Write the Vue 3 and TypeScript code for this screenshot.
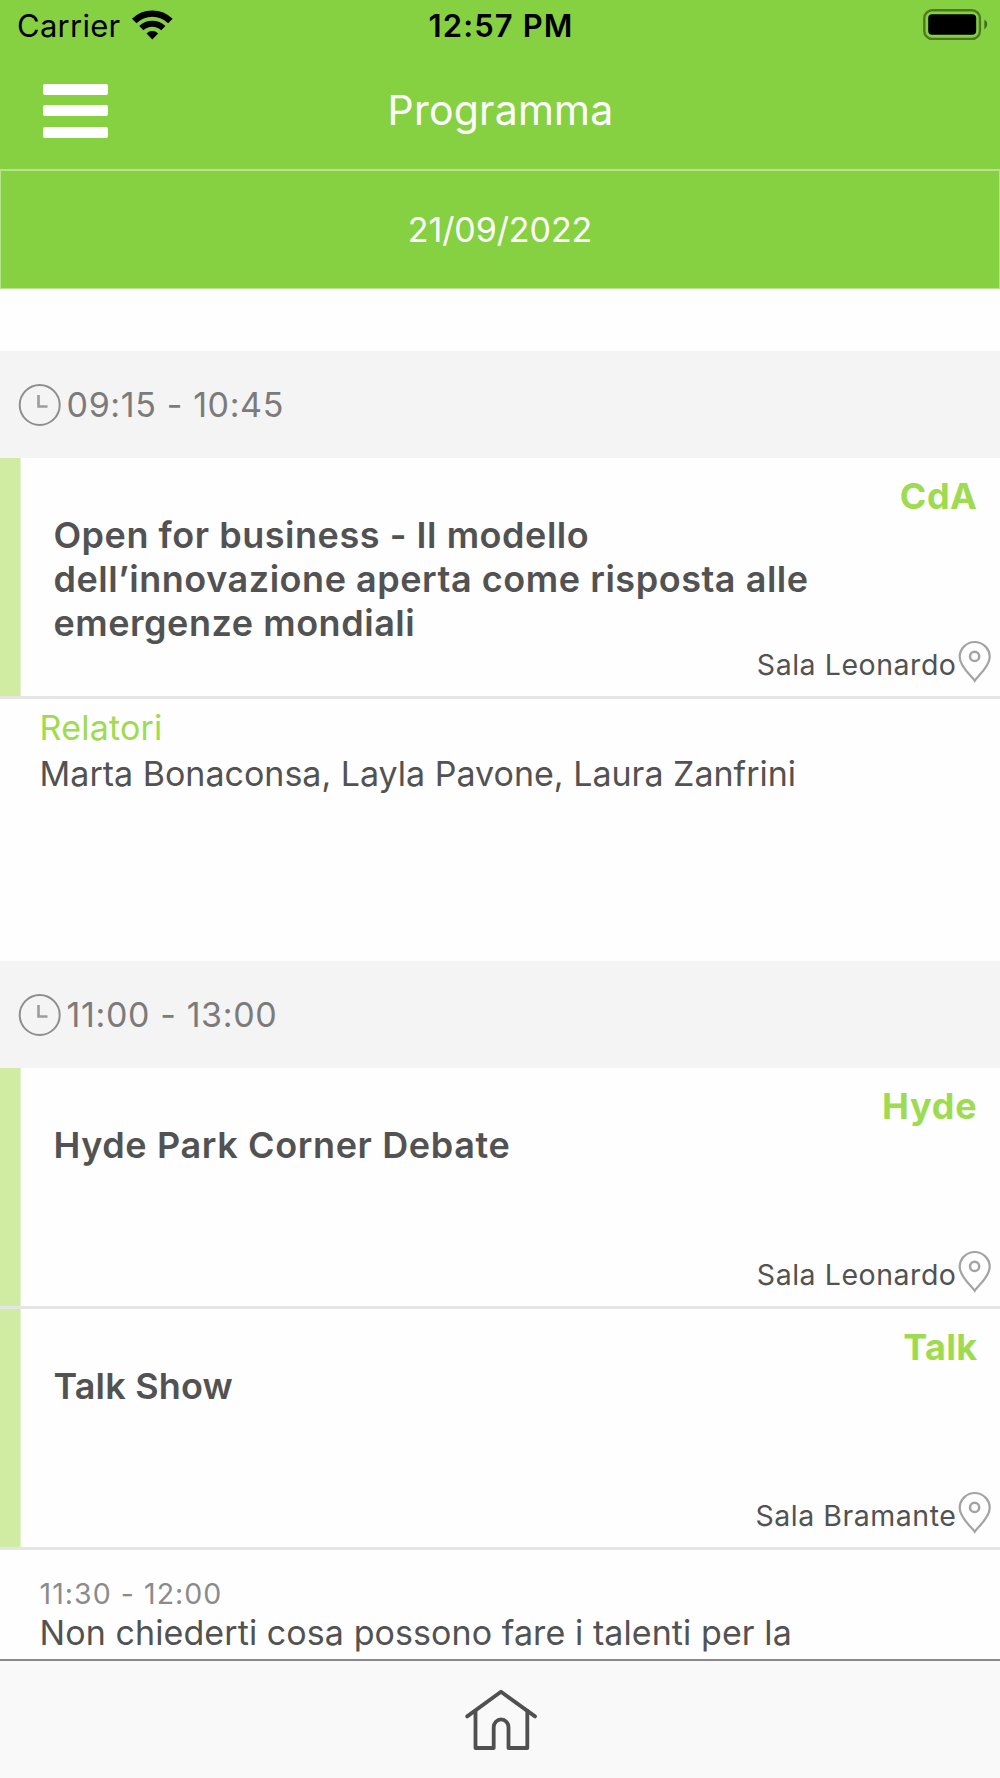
<script setup lang="ts">
interface Talk {
  tag: string
  title: string[]
  room: string
  spacing: number
  tagSpacing: number
}
interface Slot {
  time: string
  talks: Talk[]
  speakers?: string
  detail?: { time: string; text: string }
}

const slots: Slot[] = [
  {
    time: '09:15 - 10:45',
    talks: [
      {
        tag: 'CdA',
        title: [
          'Open for business - Il modello',
          'dell’innovazione aperta come risposta alle',
          'emergenze mondiali',
        ],
        room: 'Sala Leonardo',
        spacing: 0.54,
        tagSpacing: 0.5,
      },
    ],
    speakers: 'Marta Bonaconsa, Layla Pavone, Laura Zanfrini',
  },
  {
    time: '11:00 - 13:00',
    talks: [
      { tag: 'Hyde', title: ['Hyde Park Corner Debate'], room: 'Sala Leonardo', spacing: 0.62, tagSpacing: 0.75 },
      { tag: 'Talk', title: ['Talk Show'], room: 'Sala Bramante', spacing: 0.2, tagSpacing: 0.32 },
    ],
    detail: { time: '11:30 - 12:00', text: 'Non chiederti cosa possono fare i talenti per la' },
  },
]
</script>

<template>
  <div class="screen">
    <header class="top">
      <div class="status">
        <div class="carrier">
          <span>Carrier</span>
          <svg class="wifi" width="42" height="32" viewBox="0 0 42 32" fill="none" stroke="#000">
            <path d="M3.2 12.1A25.7 25.7 0 0 1 39.4 12.1" stroke-width="6.4" />
            <path d="M10.3 19.2A15.7 15.7 0 0 1 32.3 19.2" stroke-width="6" />
            <path d="M21.3 30.4L15.5 24.4A8.3 8.3 0 0 1 27.1 24.4Z" fill="#000" stroke="none" />
          </svg>
        </div>
        <div class="clock-text">12:57 PM</div>
        <div class="power">
          <svg width="66" height="34" viewBox="0 0 66 34">
            <rect x="1.3" y="1.3" width="55.6" height="28.6" rx="8" fill="none" stroke="#000" stroke-opacity=".42" stroke-width="2.4" />
            <rect x="5.2" y="5.2" width="48" height="20.6" rx="4" fill="#000" />
            <path d="M61.4 10.6q2.7 1.6 2.7 4.9t-2.7 4.9z" fill="#000" fill-opacity=".5" />
          </svg>
        </div>
      </div>
      <div class="nav">
        <button class="menu" aria-label="Menu"><i></i><i></i><i></i></button>
        <h1>Programma</h1>
      </div>
      <div class="date">21/09/2022</div>
    </header>

    <main class="list">
      <section v-for="slot in slots" :key="slot.time" class="slot">
        <div class="slot-time">
          <svg width="43" height="43" viewBox="0 0 43 43" fill="none" stroke="#8e8e8e">
            <circle cx="21.7" cy="22" r="20" stroke-width="2" />
            <path d="M20.5 12V23.5H29.5" stroke="#9c9c9c" stroke-width="2.6" />
          </svg>
          <span>{{ slot.time }}</span>
        </div>
        <article v-for="talk in slot.talks" :key="talk.tag" class="card">
          <h2 :style="{ letterSpacing: talk.spacing + 'px' }">
            <span v-for="line in talk.title" :key="line">{{ line }}</span>
          </h2>
          <div class="side">
            <strong :style="{ letterSpacing: talk.tagSpacing + 'px' }">{{ talk.tag }}</strong>
            <div class="room">
              <span>{{ talk.room }}</span>
              <svg width="34" height="43" viewBox="0 0 34 43" fill="none" stroke="#a3a3a3" stroke-width="2.2">
                <path d="M16.7 40.8C14.2 36.6 1.7 26.9 1.7 17A15 15 0 0 1 31.7 17C31.7 26.9 19.2 36.6 16.7 40.8Z" />
                <circle cx="16.6" cy="16.4" r="4.6" stroke-width="2.5" />
              </svg>
            </div>
          </div>
        </article>
        <div v-if="slot.speakers" class="speakers">
          <div class="label">Relatori</div>
          <div>{{ slot.speakers }}</div>
        </div>
        <div v-if="slot.detail" class="detail">
          <div class="when">{{ slot.detail.time }}</div>
          <div class="what">{{ slot.detail.text }}</div>
        </div>
      </section>
    </main>

    <footer class="tabbar">
      <svg width="76" height="66" viewBox="0 0 76 66" fill="none" stroke="#505050" stroke-width="3.8" stroke-linecap="round" stroke-linejoin="round">
        <path d="M5.2 29.4L39 4.8L73 29.4" />
        <path d="M13.5 24V61H31.7V40.2A7.4 7.8 0 0 1 46.5 40.2V61H65.3V24" />
      </svg>
    </footer>
  </div>
</template>

<style>
body {
  margin: 0;
}
</style>

<style scoped>
.screen {
  display: flex;
  flex-direction: column;
  width: 1000px;
  height: 1778px;
  overflow: hidden;
  background: #fefefe;
  color: #525252;
  font-family: Inter, 'Liberation Sans', sans-serif;
}
.top {
  flex: none;
  background: #86d141;
}
.status {
  display: grid;
  grid-template-columns: 1fr auto 1fr;
  height: 52px;
  color: #000;
  font-size: 31px;
  line-height: 51px;
}
.carrier {
  display: flex;
  padding-left: 17px;
  letter-spacing: 0.26px;
}
.wifi {
  margin: 9px 0 0 11px;
}
.clock-text {
  padding-left: 2px;
  font-weight: 600;
  letter-spacing: 1.1px;
}
.power {
  display: flex;
  justify-content: flex-end;
  padding: 9px 11px 0 0;
}
.nav {
  display: grid;
  grid-template-columns: 1fr auto 1fr;
  align-items: center;
  height: 117px;
}
.menu {
  display: flex;
  flex-direction: column;
  gap: 10.5px;
  width: 65px;
  margin: 0 0 0 43px;
  padding: 0;
  border: 0;
  background: none;
}
.menu i {
  height: 11px;
  border-radius: 2px;
  background: #fff;
}
h1 {
  margin: 0;
  padding: 0 0 2px 1px;
  color: #fff;
  font-size: 41px;
  font-weight: 400;
  letter-spacing: 0.2px;
}
.date {
  box-sizing: border-box;
  height: 120px;
  border: 1px solid #b6e38c;
  border-top-width: 2px;
  color: #fff;
  font-size: 34px;
  line-height: 117px;
  letter-spacing: -0.09px;
  text-align: center;
}
.list {
  flex: 1;
  min-height: 0;
  overflow: hidden;
  padding-top: 62px;
}
.slot-time {
  display: flex;
  align-items: center;
  height: 107px;
  padding-left: 18px;
  background: #f4f4f4;
  color: #7b7b7b;
  font-size: 34px;
  letter-spacing: 0.62px;
}
.slot-time span {
  margin-left: 5.6px;
}
.card {
  display: flex;
  justify-content: space-between;
  box-sizing: border-box;
  height: 241px;
  /* accent stripe ends above the divider line */
  background: linear-gradient(#cfeca2, #cfeca2) 0 0 / 20.6px 238px no-repeat;
  border-bottom: 3px solid #e5e5e5;
}
h2 {
  width: 760px;
  margin: 0;
  padding: 55px 0 0 53.4px;
  font-size: 36px;
  font-weight: 600;
  line-height: 44px;
}
h2 span {
  display: block;
  white-space: nowrap;
}
.side {
  display: flex;
  flex: none;
  flex-direction: column;
  align-items: flex-end;
  justify-content: space-between;
  width: 246px;
  margin-left: -60px;
  padding-top: 15.5px;
}
.side strong {
  margin-right: 22.5px;
  color: #9fdb50;
  font-size: 36px;
  font-weight: 700;
  line-height: 44px;
}
.room {
  display: flex;
  align-items: center;
  padding: 0 8px 13px 0;
  font-size: 28.5px;
  letter-spacing: 0.54px;
  white-space: nowrap;
}
.room span {
  padding-top: 6px;
  margin-right: 1.5px;
}
.room svg {
  flex: none;
}
.speakers {
  box-sizing: border-box;
  height: 262px;
  padding: 6px 0 0 39.6px;
  font-size: 34px;
  line-height: 46px;
}
.label {
  color: #9fdb50;
  letter-spacing: 0.2px;
}
.detail {
  padding: 24px 0 0 39.6px;
}
.when {
  color: #8b8b8b;
  font-size: 28.5px;
  line-height: 40px;
  letter-spacing: 1.04px;
}
.what {
  font-size: 34px;
  line-height: 37px;
  letter-spacing: 0.08px;
  white-space: nowrap;
}
.tabbar {
  box-sizing: border-box;
  display: flex;
  flex: none;
  align-items: flex-start;
  justify-content: center;
  height: 119px;
  padding-top: 26px;
  border-top: 2px solid #8a8a8a;
  background: #f9f9f9;
}
</style>
